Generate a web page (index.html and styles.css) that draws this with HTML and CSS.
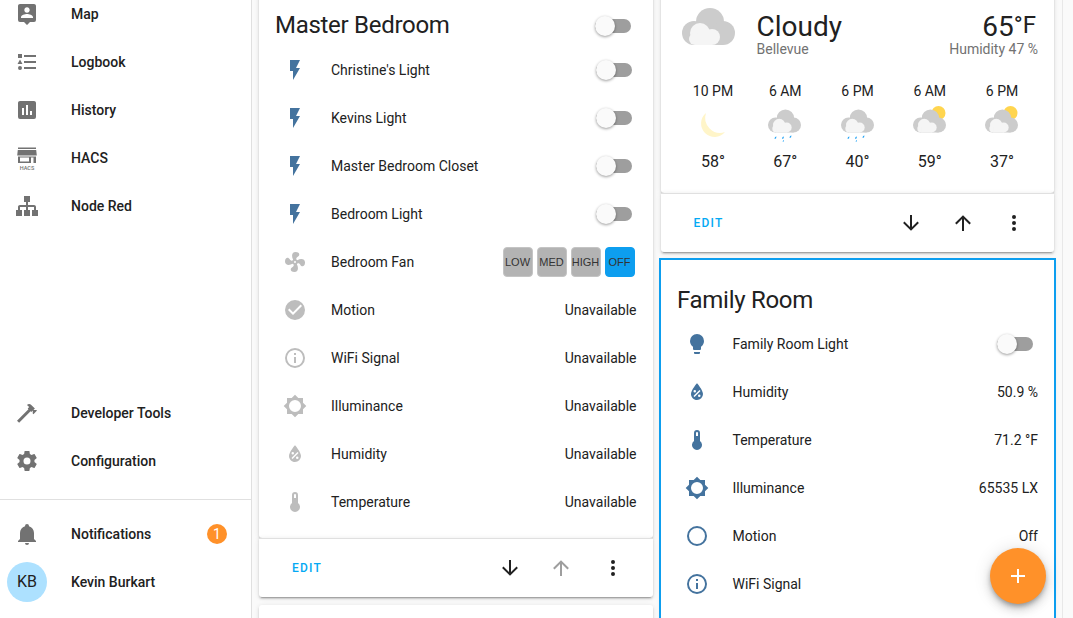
FILE: index.html
```html
<!DOCTYPE html>
<html lang="en">

<head>
    <meta charset="UTF-8">
    <meta name="viewport" content="width=device-width, initial-scale=1.0">
    <title>Home Assistant</title>
    <link rel="stylesheet" href="styles.css">
</head>

<body>
    <!-- icons used more than once -->
    <svg class="sprite" xmlns="http://www.w3.org/2000/svg">
        <symbol id="i-flash" viewBox="0 0 24 24"><path d="M7,2V13H10V22L17,10H13L17,2H7Z"/></symbol>
        <symbol id="i-info" viewBox="0 0 24 24"><path d="M11,9H13V7H11M12,20C7.59,20 4,16.41 4,12C4,7.59 7.59,4 12,4C16.41,4 20,7.59 20,12C20,16.41 16.41,20 12,20M12,2A10,10 0 0,0 2,12A10,10 0 0,0 12,22A10,10 0 0,0 22,12A10,10 0 0,0 12,2M11,17H13V11H11V17Z"/></symbol>
        <symbol id="i-bright" viewBox="0 0 24 24"><path fill-rule="evenodd" d="M12,18A6,6 0 0,1 6,12A6,6 0 0,1 12,6A6,6 0 0,1 18,12A6,6 0 0,1 12,18M20,15.31L23.31,12L20,8.69V4H15.31L12,0.69L8.69,4H4V8.69L0.69,12L4,15.31V20H8.69L12,23.31L15.31,20H20V15.31Z"/></symbol>
        <symbol id="i-water" viewBox="0 0 24 24"><path fill-rule="evenodd" d="M12,3.25C12,3.25 6,10 6,14C6,17.32 8.69,20 12,20A6,6 0 0,0 18,14C18,10 12,3.25 12,3.25M14.47,9.97L15.53,11.03L9.53,17.03L8.47,15.97M9.75,10A1.25,1.25 0 0,1 11,11.25A1.25,1.25 0 0,1 9.75,12.5A1.25,1.25 0 0,1 8.5,11.25A1.25,1.25 0 0,1 9.75,10M14.25,14.5A1.25,1.25 0 0,1 15.5,15.75A1.25,1.25 0 0,1 14.25,17A1.25,1.25 0 0,1 13,15.75A1.25,1.25 0 0,1 14.25,14.5Z"/></symbol>
        <symbol id="i-thermo" viewBox="0 0 24 24"><path fill-rule="evenodd" d="M15 13V5A3 3 0 0 0 9 5V13A5 5 0 1 0 15 13M12 4A1 1 0 0 1 13 5V8H11V5A1 1 0 0 1 12 4Z"/></symbol>
        <symbol id="i-down" viewBox="0 0 24 24"><path d="M11,4H13V16L18.5,10.5L19.92,11.92L12,19.84L4.08,11.92L5.5,10.5L11,16V4Z"/></symbol>
        <symbol id="i-up" viewBox="0 0 24 24"><path d="M13,20H11V8L5.5,13.5L4.08,12.08L12,4.16L19.92,12.08L18.5,13.5L13,8V20Z"/></symbol>
        <symbol id="i-dots" viewBox="0 0 24 24"><path d="M12,16A2,2 0 0,1 14,18A2,2 0 0,1 12,20A2,2 0 0,1 10,18A2,2 0 0,1 12,16M12,10A2,2 0 0,1 14,12A2,2 0 0,1 12,14A2,2 0 0,1 10,12A2,2 0 0,1 12,10M12,4A2,2 0 0,1 14,6A2,2 0 0,1 12,8A2,2 0 0,1 10,6A2,2 0 0,1 12,4Z"/></symbol>
        <symbol id="w-cloud" viewBox="7 8 53 37">
            <g fill="#ccc">
                <circle cx="35" cy="22" r="14"/>
                <circle cx="19" cy="33" r="12"/>
                <circle cx="48" cy="33" r="12"/>
                <rect x="19" y="30" width="29" height="15"/>
            </g>
            <g fill="#f5f5f5">
                <circle cx="25" cy="33" r="10"/>
                <circle cx="20" cy="39" r="6"/>
                <circle cx="37" cy="37" r="8"/>
                <rect x="20" y="35" width="17" height="10"/>
            </g>
        </symbol>
    </svg>

    <div class="app">
        <nav class="sidebar">
            <div class="nav-group nav-top">
                <a class="nav-item">
                    <svg class="icon" viewBox="0 0 24 24"><path d="M18,16H6V15.1C6,13.1 10,12 12,12C14,12 18,13.1 18,15.1M12,5.3C13.5,5.3 14.7,6.5 14.7,8C14.7,9.5 13.5,10.7 12,10.7C10.5,10.7 9.3,9.5 9.3,8C9.3,6.5 10.5,5.3 12,5.3M19,2H5C3.89,2 3,2.89 3,4V18A2,2 0 0,0 5,20H9L12,23L15,20H19A2,2 0 0,0 21,18V4C21,2.89 20.1,2 19,2Z" fill-rule="evenodd"/></svg>
                    <span>Map</span>
                </a>
                <a class="nav-item">
                    <svg class="icon" viewBox="0 0 24 24"><path d="M5,9.5L7.5,14H2.5L5,9.5M3,4H7V8H3V4M5,20A2,2 0 0,0 7,18A2,2 0 0,0 5,16A2,2 0 0,0 3,18A2,2 0 0,0 5,20M9,5V7H21V5H9M9,19H21V17H9V19M9,13H21V11H9V13Z"/></svg>
                    <span>Logbook</span>
                </a>
                <a class="nav-item">
                    <svg class="icon" viewBox="0 0 24 24"><path d="M9,17H7V10H9M13,17H11V7H13M17,17H15V13H17M19,3H5C3.89,3 3,3.89 3,5V19A2,2 0 0,0 5,21H19A2,2 0 0,0 21,19V5C21,3.89 20.1,3 19,3Z" fill-rule="evenodd"/></svg>
                    <span>History</span>
                </a>
                <a class="nav-item">
                    <svg class="icon" viewBox="0 0 24 24">
                        <path d="M3,1.5H21V3H3ZM2.8,4H21.2L21.8,9.5H2.2Z"/>
                        <path fill-rule="evenodd" d="M3,10.5H21V17H3ZM5,11.5V15.5H14V11.5ZM16,11.5V17H18.5V11.5Z"/>
                        <text class="hacs-text" x="12" y="23.5">HACS</text>
                    </svg>
                    <span>HACS</span>
                </a>
                <a class="nav-item">
                    <svg class="icon" viewBox="0 0 24 24"><path d="M9,2V8H11V11H5C3.89,11 3,11.89 3,13V16H1V22H7V16H5V13H11V16H9V22H15V16H13V13H19V16H17V22H23V16H21V13C21,11.89 20.11,11 19,11H13V8H15V2H9Z"/></svg>
                    <span>Node Red</span>
                </a>
            </div>
            <div class="nav-group nav-bottom">
                <a class="nav-item">
                    <svg class="icon" viewBox="0 0 24 24"><path d="M2 19.63L13.43 8.2L12.72 7.5L14.14 6.07L12 3.89C13.2 2.7 15.09 2.7 16.27 3.89L19.87 7.5L18.45 8.91H21.29L22 9.62L18.45 13.21L17.74 12.5V9.62L16.27 11.04L15.56 10.33L4.13 21.76L2 19.63Z"/></svg>
                    <span>Developer Tools</span>
                </a>
                <a class="nav-item">
                    <svg class="icon" viewBox="0 0 24 24"><path fill-rule="evenodd" d="M12,15.5A3.5,3.5 0 0,1 8.5,12A3.5,3.5 0 0,1 12,8.5A3.5,3.5 0 0,1 15.5,12A3.5,3.5 0 0,1 12,15.5M19.43,12.97C19.47,12.65 19.5,12.33 19.5,12C19.5,11.67 19.47,11.34 19.43,11L21.54,9.37C21.73,9.22 21.78,8.95 21.66,8.73L19.66,5.27C19.54,5.05 19.27,4.96 19.05,5.05L16.56,6.05C16.04,5.66 15.5,5.32 14.87,5.07L14.5,2.42C14.46,2.18 14.25,2 14,2H10C9.75,2 9.54,2.18 9.5,2.42L9.13,5.07C8.5,5.32 7.96,5.66 7.44,6.05L4.95,5.05C4.73,4.96 4.46,5.05 4.34,5.27L2.34,8.73C2.21,8.95 2.27,9.22 2.46,9.37L4.57,11C4.53,11.34 4.5,11.67 4.5,12C4.5,12.33 4.53,12.65 4.57,12.97L2.46,14.63C2.27,14.78 2.21,15.05 2.34,15.27L4.34,18.73C4.46,18.95 4.73,19.03 4.95,18.95L7.44,17.94C7.96,18.34 8.5,18.68 9.13,18.93L9.5,21.58C9.54,21.82 9.75,22 10,22H14C14.25,22 14.46,21.82 14.5,21.58L14.87,18.93C15.5,18.67 16.04,18.34 16.56,17.94L19.05,18.95C19.27,19.03 19.54,18.95 19.66,18.73L21.66,15.27C21.78,15.05 21.73,14.78 21.54,14.63L19.43,12.97Z"/></svg>
                    <span>Configuration</span>
                </a>
            </div>
            <div class="nav-group nav-user">
                <a class="nav-item">
                    <svg class="icon" viewBox="0 0 24 24"><path d="M21,19V20H3V19L5,17V11C5,7.9 7.03,5.17 10,4.29C10,4.19 10,4.1 10,4A2,2 0 0,1 12,2A2,2 0 0,1 14,4C14,4.1 14,4.19 14,4.29C16.97,5.17 19,7.9 19,11V17L21,19M14,21A2,2 0 0,1 12,23A2,2 0 0,1 10,21"/></svg>
                    <span>Notifications</span>
                    <b class="badge">1</b>
                </a>
                <a class="nav-item">
                    <i class="avatar">KB</i>
                    <span>Kevin Burkart</span>
                </a>
            </div>
        </nav>

        <main class="board">
            <div class="column">
                <section class="card">
                    <div class="card-head">
                        <h2>Master Bedroom</h2>
                        <i class="toggle"></i>
                    </div>
                    <div class="row">
                        <svg class="state-icon on"><use href="#i-flash"/></svg>
                        <span class="name">Christine's Light</span>
                        <i class="toggle"></i>
                    </div>
                    <div class="row">
                        <svg class="state-icon on"><use href="#i-flash"/></svg>
                        <span class="name">Kevins Light</span>
                        <i class="toggle"></i>
                    </div>
                    <div class="row">
                        <svg class="state-icon on"><use href="#i-flash"/></svg>
                        <span class="name">Master Bedroom Closet</span>
                        <i class="toggle"></i>
                    </div>
                    <div class="row">
                        <svg class="state-icon on"><use href="#i-flash"/></svg>
                        <span class="name">Bedroom Light</span>
                        <i class="toggle"></i>
                    </div>
                    <div class="row">
                        <svg class="state-icon" viewBox="0 0 24 24"><path d="M12,11A1,1 0 0,0 11,12A1,1 0 0,0 12,13A1,1 0 0,0 13,12A1,1 0 0,0 12,11M12.5,2C17,2 17.11,5.57 14.75,6.75C13.76,7.24 13.32,8.29 13.13,9.22C13.61,9.42 14.03,9.73 14.35,10.13C18.05,8.13 22.03,8.92 22.03,12.5C22.03,17 18.46,17.1 17.28,14.73C16.78,13.74 15.72,13.3 14.79,13.11C14.59,13.59 14.28,14 13.88,14.34C15.87,18.03 15.08,22 11.5,22C7,22 6.91,18.42 9.27,17.24C10.25,16.75 10.69,15.71 10.89,14.79C10.4,14.59 9.97,14.27 9.65,13.87C5.96,15.85 2,15.07 2,11.5C2,7 5.56,6.89 6.74,9.26C7.24,10.25 8.29,10.68 9.22,10.87C9.41,10.39 9.73,9.97 10.14,9.65C8.15,5.96 8.94,2 12.5,2Z"/></svg>
                        <span class="name">Bedroom Fan</span>
                        <div class="fan-btns">
                            <button>LOW</button>
                            <button>MED</button>
                            <button>HIGH</button>
                            <button class="active">OFF</button>
                        </div>
                    </div>
                    <div class="row">
                        <svg class="state-icon" viewBox="0 0 24 24"><path d="M10,17L5,12L6.41,10.59L10,14.17L17.59,6.58L19,8M12,2A10,10 0 0,0 2,12A10,10 0 0,0 12,22A10,10 0 0,0 22,12A10,10 0 0,0 12,2Z" fill-rule="evenodd"/></svg>
                        <span class="name">Motion</span>
                        <span class="value">Unavailable</span>
                    </div>
                    <div class="row">
                        <svg class="state-icon"><use href="#i-info"/></svg>
                        <span class="name">WiFi Signal</span>
                        <span class="value">Unavailable</span>
                    </div>
                    <div class="row">
                        <svg class="state-icon"><use href="#i-bright"/></svg>
                        <span class="name">Illuminance</span>
                        <span class="value">Unavailable</span>
                    </div>
                    <div class="row">
                        <svg class="state-icon"><use href="#i-water"/></svg>
                        <span class="name">Humidity</span>
                        <span class="value">Unavailable</span>
                    </div>
                    <div class="row">
                        <svg class="state-icon"><use href="#i-thermo"/></svg>
                        <span class="name">Temperature</span>
                        <span class="value">Unavailable</span>
                    </div>
                </section>
                <div class="card-actions">
                    <a class="edit">EDIT</a>
                    <svg class="act act-down"><use href="#i-down"/></svg>
                    <svg class="act muted"><use href="#i-up"/></svg>
                    <svg class="act"><use href="#i-dots"/></svg>
                </div>
                <section class="card next-card"></section>
            </div>

            <div class="column">
                <section class="card weather">
                    <div class="weather-now">
                        <svg class="weather-big"><use href="#w-cloud"/></svg>
                        <div class="weather-main">
                            <div class="big-text">Cloudy</div>
                            <div class="sub-text">Bellevue</div>
                        </div>
                        <div class="weather-temp">
                            <div class="big-text">65<sup>°F</sup></div>
                            <div class="sub-text">Humidity 47 %</div>
                        </div>
                    </div>
                    <div class="forecast">
                        <div class="day">
                            <span>10 PM</span>
                            <svg class="day-icon" viewBox="0 0 40 40"><path fill="#fff5c9" d="M13,7A13.5,13.5 0 1,0 32,26A15,15 0 0,1 13,7Z"/></svg>
                            <b>58°</b>
                        </div>
                        <div class="day">
                            <span>6 AM</span>
                            <svg class="day-icon" viewBox="0 0 40 40">
                                <use href="#w-cloud" x="3" y="3" width="33" height="24"/>
                                <path class="rain" d="M10,31L11.5,30.5L11,32.5L9.5,33ZM17.5,31L19,30.5L18.5,32.5L17,33ZM25,30L26.5,29.5L26,31.5L24.5,32ZM18,34.5L19,34L18.7,35.5L17.7,36Z"/>
                            </svg>
                            <b>67°</b>
                        </div>
                        <div class="day">
                            <span>6 PM</span>
                            <svg class="day-icon" viewBox="0 0 40 40">
                                <use href="#w-cloud" x="3" y="3" width="33" height="24"/>
                                <path class="rain" d="M10,31L11.5,30.5L11,32.5L9.5,33ZM17.5,31L19,30.5L18.5,32.5L17,33ZM25,30L26.5,29.5L26,31.5L24.5,32ZM18,34.5L19,34L18.7,35.5L17.7,36Z"/>
                            </svg>
                            <b>40°</b>
                        </div>
                        <div class="day">
                            <span>6 AM</span>
                            <svg class="day-icon" viewBox="0 0 40 40">
                                <circle cx="28.5" cy="7" r="7" fill="#ffd54f"/>
                                <use href="#w-cloud" x="3" y="3" width="33" height="24"/>
                            </svg>
                            <b>59°</b>
                        </div>
                        <div class="day">
                            <span>6 PM</span>
                            <svg class="day-icon" viewBox="0 0 40 40">
                                <circle cx="28.5" cy="7" r="7" fill="#ffd54f"/>
                                <use href="#w-cloud" x="3" y="3" width="33" height="24"/>
                            </svg>
                            <b>37°</b>
                        </div>
                    </div>
                </section>
                <div class="card-actions">
                    <a class="edit">EDIT</a>
                    <svg class="act act-down"><use href="#i-down"/></svg>
                    <svg class="act"><use href="#i-up"/></svg>
                    <svg class="act"><use href="#i-dots"/></svg>
                </div>

                <section class="card selected">
                    <div class="card-head">
                        <h2>Family Room</h2>
                    </div>
                    <div class="row">
                        <svg class="state-icon on" viewBox="0 0 24 24"><path d="M12,2A7,7 0 0,0 5,9C5,11.38 6.19,13.47 8,14.74V17A1,1 0 0,0 9,18H15A1,1 0 0,0 16,17V14.74C17.81,13.47 19,11.38 19,9A7,7 0 0,0 12,2M9,21A1,1 0 0,0 10,22H14A1,1 0 0,0 15,21V20H9V21Z"/></svg>
                        <span class="name">Family Room Light</span>
                        <i class="toggle"></i>
                    </div>
                    <div class="row">
                        <svg class="state-icon on"><use href="#i-water"/></svg>
                        <span class="name">Humidity</span>
                        <span class="value">50.9 %</span>
                    </div>
                    <div class="row">
                        <svg class="state-icon on"><use href="#i-thermo"/></svg>
                        <span class="name">Temperature</span>
                        <span class="value">71.2 °F</span>
                    </div>
                    <div class="row">
                        <svg class="state-icon on"><use href="#i-bright"/></svg>
                        <span class="name">Illuminance</span>
                        <span class="value">65535 LX</span>
                    </div>
                    <div class="row">
                        <svg class="state-icon on" viewBox="0 0 24 24"><path d="M12,20A8,8 0 0,1 4,12A8,8 0 0,1 12,4A8,8 0 0,1 20,12A8,8 0 0,1 12,20M12,2A10,10 0 0,0 2,12A10,10 0 0,0 12,22A10,10 0 0,0 22,12A10,10 0 0,0 12,2Z" fill-rule="evenodd"/></svg>
                        <span class="name">Motion</span>
                        <span class="value">Off</span>
                    </div>
                    <div class="row">
                        <svg class="state-icon on"><use href="#i-info"/></svg>
                        <span class="name">WiFi Signal</span>
                    </div>
                </section>
            </div>

            <div class="scroll-track"></div>
        </main>
    </div>

    <button class="fab">
        <svg viewBox="0 0 24 24"><path d="M19,13H13V19H11V13H5V11H11V5H13V11H19V13Z"/></svg>
    </button>
</body>

</html>
```

FILE: styles.css
```css
* {
    box-sizing: border-box;
}

html,
body {
    margin: 0;
    height: 100%;
    overflow: hidden;
}

body {
    font-family: Roboto, sans-serif;
    font-size: 14px;
    color: #212121;
    background-color: #fafafa;
}

.sprite {
    display: none;
}

.app {
    display: flex;
    height: 618px;
    overflow: hidden;
}

/* sidebar */
.sidebar {
    width: 252px;
    flex-shrink: 0;
    display: flex;
    flex-direction: column;
    background-color: #fff;
    border-right: 1px solid #e0e0e0;
}

.nav-top {
    margin-top: -10px;
}

.nav-bottom {
    margin-top: auto;
    padding-bottom: 14px;
}

.nav-user {
    border-top: 1px solid #e0e0e0;
    padding: 10px 0 12px;
}

.nav-item {
    display: flex;
    align-items: center;
    height: 48px;
    padding-left: 15px;
    font-weight: 500;
    color: #212121;
}

.nav-item span {
    margin-left: 32px;
}

.icon {
    width: 24px;
    height: 24px;
    flex-shrink: 0;
    fill: #727272;
}

.hacs-text {
    font-family: Roboto, sans-serif;
    font-size: 5.5px;
    font-weight: 500;
    text-anchor: middle;
}

.badge {
    margin-left: auto;
    margin-right: 24px;
    width: 20px;
    height: 20px;
    border-radius: 50%;
    background-color: #ff9129;
    color: #fff;
    font-weight: 400;
    line-height: 20px;
    text-align: center;
}

.avatar {
    width: 40px;
    height: 40px;
    margin-left: -8px;
    margin-right: -8px;
    border-radius: 50%;
    background-color: #ade1ff;
    font-size: 16px;
    font-style: normal;
    font-weight: 400;
    line-height: 40px;
    text-align: center;
}

/* cards */
.board {
    flex: 1;
    display: flex;
    gap: 8px;
    padding-left: 7px;
    margin-top: -13px;
}

.column {
    width: 393.5px;
    flex-shrink: 0;
}

.scroll-track {
    width: 11px;
    margin-left: auto;
    border-left: 1px solid #e8e8e8;
}

.card {
    background-color: #fff;
    border-radius: 0 0 3px 3px;
    padding-bottom: 12px;
    box-shadow: 0 2px 2px 0 rgba(0, 0, 0, .14), 0 1px 5px 0 rgba(0, 0, 0, .12), 0 3px 1px -2px rgba(0, 0, 0, .2);
}

.card-head {
    display: flex;
    align-items: center;
    justify-content: space-between;
    padding: 17px 22px 0 16px;
    height: 59px;
}

.card-head h2 {
    margin: 0;
    font-size: 24px;
    font-weight: 400;
    letter-spacing: -0.012em;
    color: #212121;
}

.card-head .toggle {
    margin: 2px 0 0;
}

.row {
    display: flex;
    align-items: center;
    height: 48px;
    padding: 0 16px 0 24px;
}

.state-icon {
    width: 24px;
    height: 24px;
    flex-shrink: 0;
    fill: #bdbdbd;
}

.state-icon.on {
    fill: #44739e;
}

.name {
    margin-left: 24px;
}

.value {
    margin-left: auto;
}

.toggle {
    position: relative;
    display: block;
    width: 36px;
    height: 14px;
    margin-left: auto;
    margin-right: 5px;
    border-radius: 7px;
    background-color: #9e9e9e;
}

.toggle::after {
    content: "";
    position: absolute;
    left: 0;
    top: -3px;
    width: 20px;
    height: 20px;
    border-radius: 50%;
    background-color: #fafafa;
    box-shadow: 0 1px 3px rgba(0, 0, 0, .4);
}

.fan-btns {
    display: flex;
    gap: 4px;
    margin-left: auto;
    margin-right: 2px;
}

.fan-btns button {
    width: 30px;
    height: 30px;
    padding: 0;
    border: 1px solid #c4c4c4;
    border-radius: 4px;
    background-color: #b3b3b3;
    color: #333;
    font-family: "Liberation Sans", Arial, sans-serif;
    font-size: 11px;
}

.fan-btns button.active {
    background-color: #0d9eef;
    border-color: #0d9eef;
}

.card-actions {
    display: flex;
    align-items: center;
    height: 59px;
    margin-bottom: 8px;
    padding: 0 28px 0 33px;
    background-color: #fff;
    border-top: 1px solid #e0e0e0;
    border-radius: 0 0 3px 3px;
    box-shadow: 0 2px 2px 0 rgba(0, 0, 0, .14), 0 1px 5px 0 rgba(0, 0, 0, .12), 0 3px 1px -2px rgba(0, 0, 0, .2);
}

.edit {
    color: #03a9f4;
    font-size: 12px;
    font-weight: 500;
    letter-spacing: 1.25px;
}

.act {
    width: 24px;
    height: 24px;
    margin-left: 27.5px;
    fill: #212121;
}

.act-down {
    margin-left: auto;
}

.act.muted {
    fill: #9e9e9e;
}

.next-card {
    height: 40px;
    border-radius: 3px;
}

/* weather card */
.weather {
    padding: 12px 0 0;
}

.weather-now {
    display: flex;
    padding: 0 16px 0 21px;
}

.weather-big {
    width: 53px;
    height: 37px;
    margin-top: 9px;
    flex-shrink: 0;
}

.weather-main {
    margin-left: 22px;
}

.weather-temp {
    margin-left: auto;
    text-align: right;
}

.weather-temp .big-text {
    margin-right: 2px;
}

.big-text {
    font-size: 28px;
    line-height: 40px;
    margin-top: 8px;
}

.big-text sup {
    font-size: 24px;
    line-height: 1;
    vertical-align: 3px;
}

.sub-text {
    margin-top: -8px;
    color: #727272;
    line-height: 20px;
}

.forecast {
    display: flex;
    justify-content: space-between;
    padding: 22px 16px 19px 16.5px;
}

.day {
    width: 72px;
    display: flex;
    flex-direction: column;
    align-items: center;
}

.day span {
    line-height: 20px;
}

.day-icon {
    width: 40px;
    height: 40px;
    margin: 5px 0 4px;
    overflow: visible;
}

.day b {
    font-size: 16px;
    font-weight: 400;
    line-height: 24px;
}

.rain {
    fill: #2aa6f5;
}

/* the card being edited, blue outline on top of everything around it */
.selected {
    margin-left: 0.5px;
    outline: 2px solid #0d9eef;
    border-radius: 0;
    padding-top: 1px;
    height: 400px;
}

.selected .card-head {
    padding-top: 18px;
}

.selected .name {
    margin-left: 23.5px;
}

.fab {
    position: absolute;
    left: 990px;
    top: 548px;
    width: 56px;
    height: 56px;
    padding: 16px;
    border: none;
    border-radius: 50%;
    background-color: #ff9129;
    box-shadow: 0 6px 10px 0 rgba(0, 0, 0, .14), 0 1px 18px 0 rgba(0, 0, 0, .12), 0 3px 5px -1px rgba(0, 0, 0, .3);
}

.fab svg {
    display: block;
    fill: #fff;
}
```
